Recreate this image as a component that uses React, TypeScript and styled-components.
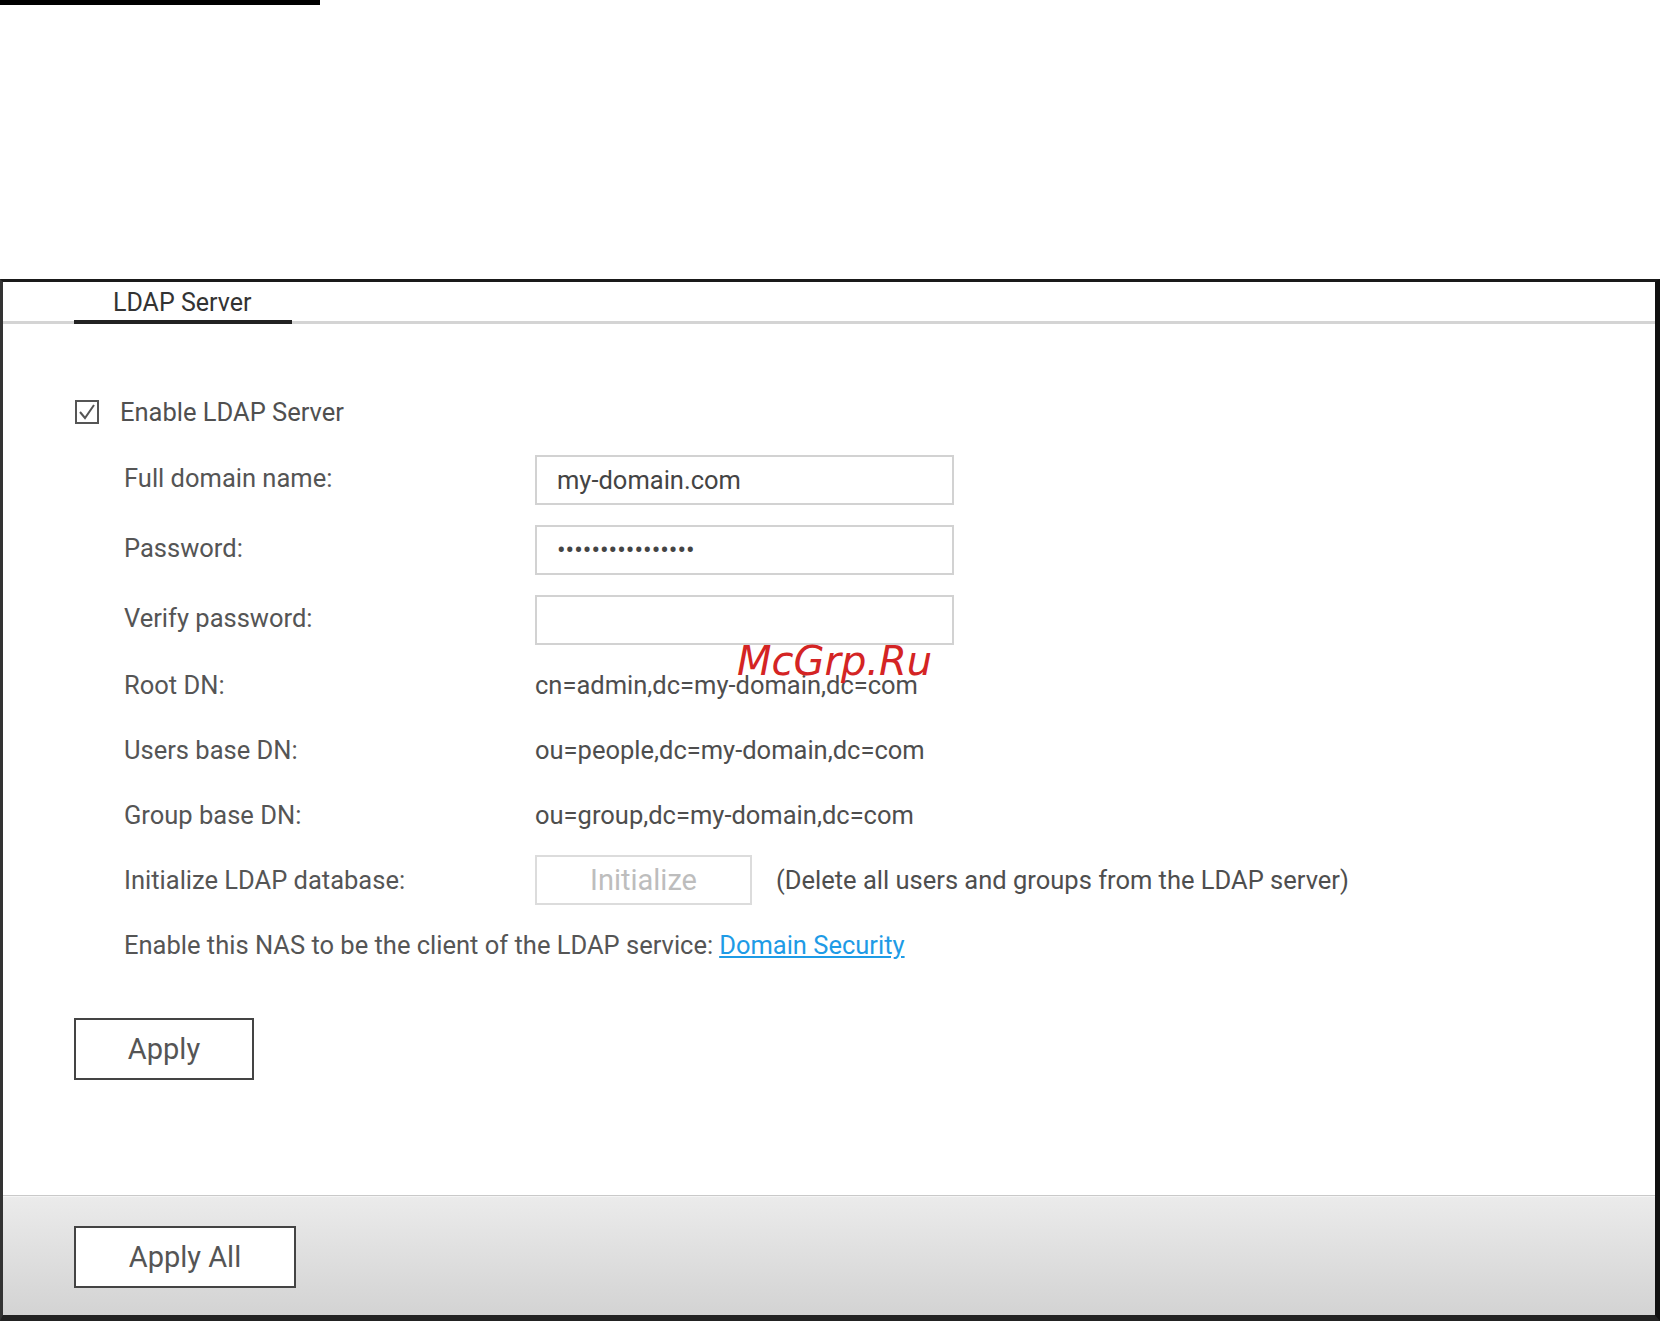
import React from 'react';
import styled, { createGlobalStyle } from 'styled-components';

const GlobalStyle = createGlobalStyle`
  html, body {
    margin: 0;
    padding: 0;
    background: #ffffff;
  }
  body {
    font-family: Roboto, "Liberation Sans", Arial, sans-serif;
  }
`;

const Page = styled.div`
  position: relative;
  width: 1660px;
  height: 1321px;
  overflow: hidden;
  background: #fff;
`;

const TopRule = styled.div`
  width: 320px;
  height: 5px;
  background: #000;
`;

const Panel = styled.div`
  box-sizing: border-box;
  margin-top: 274px;
  height: 1042px;
  display: flex;
  flex-direction: column;
  border-top: 3px solid #1a1a1a;
  border-left: 3px solid #333;
  border-right: 5px solid #111;
  border-bottom: 6px solid #222;
`;

const TabBar = styled.div`
  height: 39px;
  display: flex;
  align-items: flex-start;
  padding-left: 71px;
  border-bottom: 3px solid #d4d4d4;
`;

const Tab = styled.div`
  box-sizing: border-box;
  width: 218px;
  height: 42px;
  margin-bottom: -3px;
  padding: 6px 0 0 39px;
  border-bottom: 4px solid #222;
  font-size: 25px;
  line-height: 30px;
  color: #333;
`;

const Content = styled.div`
  flex: 1;
  padding: 73px 0 0 72px;
`;

const CheckRow = styled.label`
  display: flex;
  align-items: center;
  gap: 21px;
  height: 30px;
  font-size: 25.5px;
  color: #505050;
`;

const CheckBox = styled.span`
  box-sizing: border-box;
  width: 24px;
  height: 24px;
  border: 2px solid #555;
  display: flex;
  align-items: center;
  justify-content: center;
`;

const Form = styled.div`
  margin-top: 28px;
  padding-left: 49px;
`;

const Row = styled.div<{ $gap: number }>`
  display: flex;
  align-items: center;
  height: 50px;
  margin-bottom: ${p => p.$gap}px;
  font-size: 25.5px;
  color: #555;
`;

const Label = styled.div<{ $raised?: boolean }>`
  width: 411px;
  flex-shrink: 0;
  margin-top: ${p => (p.$raised ? -4 : 0)}px;
`;

const Value = styled.div`
  color: #4e4e4e;
  white-space: nowrap;
`;

const TextInput = styled.input`
  box-sizing: border-box;
  width: 419px;
  height: 50px;
  padding: 0 0 0 20px;
  border: 2px solid #d2d2d2;
  outline: none;
  font-family: Roboto, "Liberation Sans", Arial, sans-serif;
  font-size: 25.5px;
  color: #444;
  background: #fff;
`;

const GhostButton = styled.button`
  box-sizing: border-box;
  width: 217px;
  height: 50px;
  margin-right: 24px;
  border: 2px solid #dcdcdc;
  background: #fff;
  font-family: Roboto, "Liberation Sans", Arial, sans-serif;
  font-size: 29px;
  color: #bdbdbd;
  padding: 0;
`;

const Link = styled.a`
  color: #1e9be6;
  text-decoration: underline;
  margin-left: 6px;
`;

const ActionButton = styled.button<{ $width: number }>`
  box-sizing: border-box;
  width: ${p => p.$width}px;
  height: 62px;
  border: 2px solid #444;
  background: #fff;
  font-family: Roboto, "Liberation Sans", Arial, sans-serif;
  font-size: 29px;
  color: #555;
  padding: 0;
`;

const ApplyWrap = styled.div`
  margin-top: 48px;
  margin-left: -1px;
`;

const Footer = styled.div`
  box-sizing: border-box;
  height: 120px;
  padding: 30px 0 0 71px;
  border-top: 1px solid #c9c9c9;
  box-shadow: inset 0 1px 0 #f4f4f4;
  background: linear-gradient(#ebebeb, #d3d3d3);
`;

const Watermark = styled.div`
  position: absolute;
  left: 737px;
  top: 638px;
  font-family: "DejaVu Sans", sans-serif;
  font-style: italic;
  font-size: 40px;
  line-height: 46px;
  color: #d42424;
  pointer-events: none;
`;

const Check = () => (
  <svg width="18" height="16" viewBox="0 0 18 16">
    <path d="M2 8 L7 14 L16 1" fill="none" stroke="#555" strokeWidth="2" />
  </svg>
);

export default function App() {
  return (
    <Page>
      <GlobalStyle />
      <TopRule />
      <Panel>
        <TabBar>
          <Tab>LDAP Server</Tab>
        </TabBar>
        <Content>
          <CheckRow>
            <CheckBox>
              <Check />
            </CheckBox>
            Enable LDAP Server
          </CheckRow>
          <Form>
            <Row $gap={20}>
              <Label $raised>Full domain name:</Label>
              <TextInput readOnly defaultValue="my-domain.com" />
            </Row>
            <Row $gap={20}>
              <Label $raised>Password:</Label>
              <TextInput type="password" readOnly defaultValue="abcdefghijklmnop" />
            </Row>
            <Row $gap={15}>
              <Label $raised>Verify password:</Label>
              <TextInput type="password" readOnly defaultValue="" />
            </Row>
            <Row $gap={15}>
              <Label>Root DN:</Label>
              <Value>cn=admin,dc=my-domain,dc=com</Value>
            </Row>
            <Row $gap={15}>
              <Label>Users base DN:</Label>
              <Value>ou=people,dc=my-domain,dc=com</Value>
            </Row>
            <Row $gap={15}>
              <Label>Group base DN:</Label>
              <Value>ou=group,dc=my-domain,dc=com</Value>
            </Row>
            <Row $gap={15}>
              <Label>Initialize LDAP database:</Label>
              <GhostButton disabled>Initialize</GhostButton>
              <Value>(Delete all users and groups from the LDAP server)</Value>
            </Row>
            <Row $gap={0}>
              Enable this NAS to be the client of the LDAP service:
              <Link href="#">Domain Security</Link>
            </Row>
          </Form>
          <ApplyWrap>
            <ActionButton $width={180}>Apply</ActionButton>
          </ApplyWrap>
        </Content>
        <Footer>
          <ActionButton $width={222}>Apply All</ActionButton>
        </Footer>
      </Panel>
      <Watermark>McGrp.Ru</Watermark>
    </Page>
  );
}
